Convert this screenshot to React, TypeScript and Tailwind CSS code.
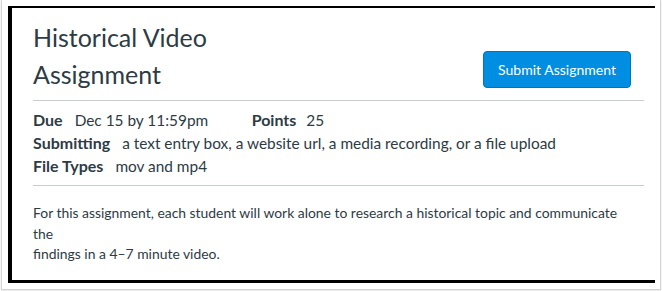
const details = [
  { label: "Submitting", value: "a text entry box, a website url, a media recording, or a file upload" },
  { label: "File Types", value: "mov and mp4" },
];

export default function App() {
  return (
    <div className="w-[662px] h-[291px] bg-white overflow-hidden font-['Lato','Liberation_Sans',sans-serif] text-[#2d3b45]">
      {/* screenshot frame */}
      <div className="ml-[1px] w-[660px] h-[290px] border-x border-b border-[#d4d4d4] shadow-[0_1px_2px_rgba(0,0,0,0.12)] pt-[6px] pl-[6px]">
        <div className="w-[647px] h-[277px] border-t-2 border-l-4 border-b-[3px] border-black pl-[21px] pr-[11px]">
          {/* header */}
          <div className="flex items-end justify-between pt-[11px] pb-[7px] border-b border-[#c7cdd1]">
            <h1 className="w-[200px] text-[25px] leading-[37px] font-normal">
              Historical Video Assignment
            </h1>
            <button className="mr-[13px] mb-[5px] h-[37px] w-[148px] rounded-[4px] bg-[#008ee2] border border-[#0374b5] text-white text-[14px]">
              Submit Assignment
            </button>
          </div>

          {/* details */}
          <div className="pt-[7px] pb-[8px] text-[15.4px] leading-[23px] border-b border-[#c7cdd1]">
            <div className="flex items-baseline h-[23px]">
              <span className="font-bold text-[16px]">Due</span>
              <span className="ml-[12px] w-[177px]">Dec 15 by 11:59pm</span>
              <span className="font-bold text-[16px]">Points</span>
              <span className="ml-[10px]">25</span>
            </div>
            {details.map((d) => (
              <div key={d.label} className="flex items-baseline h-[23px]">
                <span className="font-bold text-[16px]">{d.label}</span>
                <span className="ml-[12px]">{d.value}</span>
              </div>
            ))}
          </div>

          {/* description */}
          <p className="pt-[17px] text-[13.9px] leading-[20.5px]">
            For this assignment, each student will work alone to research a historical topic and communicate
            <br />
            the
            <br />
            findings in a 4–7 minute video.
          </p>
        </div>
      </div>
    </div>
  );
}
